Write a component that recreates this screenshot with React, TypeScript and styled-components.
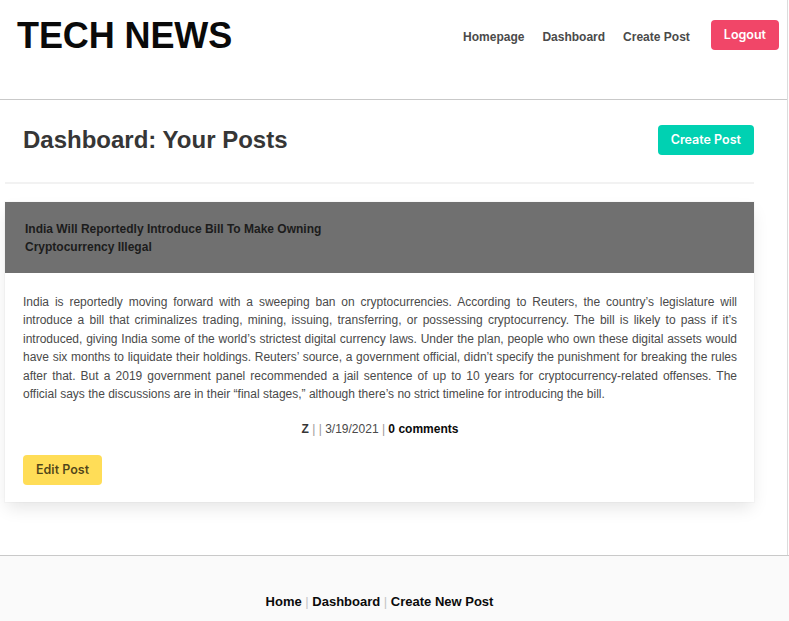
import React from "react";
import styled, { createGlobalStyle } from "styled-components";

const GlobalStyle = createGlobalStyle`
    html, body {
        margin: 0;
        padding: 0;
        background: #ffffff;
    }
    body {
        font-family: "Liberation Sans", Arial, Helvetica, sans-serif;
        color: #4a4a4a;
    }
    * {
        box-sizing: border-box;
    }
`;

const post = {
    title: "India Will Reportedly Introduce Bill To Make Owning Cryptocurrency Illegal",
    body: "India is reportedly moving forward with a sweeping ban on cryptocurrencies. According to Reuters, the country\u2019s legislature will introduce a bill that criminalizes trading, mining, issuing, transferring, or possessing cryptocurrency. The bill is likely to pass if it\u2019s introduced, giving India some of the world\u2019s strictest digital currency laws. Under the plan, people who own these digital assets would have six months to liquidate their holdings. Reuters\u2019 source, a government official, didn\u2019t specify the punishment for breaking the rules after that. But a 2019 government panel recommended a jail sentence of up to 10 years for cryptocurrency-related offenses. The official says the discussions are in their \u201cfinal stages,\u201d although there\u2019s no strict timeline for introducing the bill.",
    author: "Z",
    date: "3/19/2021",
    comments: 0,
};

export default function App() {
    return (
        <>
            <GlobalStyle />
            <Page>
                <Header>
                    <Brand>TECH NEWS</Brand>
                    <Nav>
                        <NavLink>Homepage</NavLink>
                        <NavLink>Dashboard</NavLink>
                        <NavLink>Create Post</NavLink>
                        <Button $variant="danger" $spaced>
                            Logout
                        </Button>
                    </Nav>
                </Header>

                <Main>
                    <TitleRow>
                        <PageTitle>Dashboard: Your Posts</PageTitle>
                        <Button $variant="primary">Create Post</Button>
                    </TitleRow>
                    <Divider />

                    <Card>
                        <CardHeader>
                            <CardTitle>{post.title}</CardTitle>
                        </CardHeader>
                        <CardContent>
                            <Body>{post.body}</Body>
                            <Meta>
                                <Strong>{post.author}</Strong>
                                <Sep> | | </Sep>
                                {post.date}
                                <Sep> | </Sep>
                                <Strong $dark>{post.comments} comments</Strong>
                            </Meta>
                            <Button $variant="warning">Edit Post</Button>
                        </CardContent>
                    </Card>
                </Main>
            </Page>

            <Footer>
                <FooterLink>Home</FooterLink>
                <FooterSep> | </FooterSep>
                <FooterLink>Dashboard</FooterLink>
                <FooterSep> | </FooterSep>
                <FooterLink>Create New Post</FooterLink>
            </Footer>
        </>
    );
}

const Page = styled.div`
    width: 788px;
    border-right: 1px solid #dcdcdc;
    padding-bottom: 53px;
`;

const Header = styled.header`
    height: 100px;
    display: flex;
    justify-content: space-between;
    align-items: flex-start;
    padding: 15px 8px 0 17px;
    border-bottom: 1px solid #c9c9c9;
`;

const Brand = styled.h1`
    margin: 0;
    font-size: 36px;
    line-height: 41px;
    font-weight: 700;
    color: #0a0a0a;
    letter-spacing: -0.1px;
`;

const Nav = styled.nav`
    display: flex;
    align-items: center;
    margin-top: 5px;
`;

const NavLink = styled.a`
    padding: 4px 9px 0;
    font-size: 12px;
    font-weight: 700;
    color: #4a4a4a;
    line-height: 26px;
    cursor: pointer;
`;

const buttonColors = {
    danger: { bg: "#f14668", fg: "#ffffff" },
    primary: { bg: "#00d1b2", fg: "#ffffff" },
    warning: { bg: "#ffdd57", fg: "rgba(0, 0, 0, 0.7)" },
};

const Button = styled.button<{ $variant: keyof typeof buttonColors; $spaced?: boolean }>`
    height: 30px;
    padding: 0 13px;
    margin-left: ${props => (props.$spaced ? "12px" : "0")};
    border: none;
    border-radius: 4px;
    background: ${props => buttonColors[props.$variant].bg};
    color: ${props => buttonColors[props.$variant].fg};
    font-family: Inter, "Liberation Sans", sans-serif;
    font-size: 12.5px;
    font-weight: 600;
    line-height: 30px;
    cursor: pointer;
`;

const Main = styled.main`
    width: 749px;
    margin-left: 5px;
`;

const TitleRow = styled.div`
    display: flex;
    justify-content: space-between;
    align-items: center;
    margin-top: 25px;
    padding-left: 18px;
`;

const PageTitle = styled.h2`
    margin: -1px 0 0;
    font-size: 24px;
    line-height: 30px;
    font-weight: 700;
    color: #363636;
`;

const Divider = styled.hr`
    height: 2px;
    margin: 27px 0 18px;
    border: none;
    background: #f2f2f2;
`;

const Card = styled.article`
    background: #ffffff;
    box-shadow: 0 0.5em 1em -0.125em rgba(10, 10, 10, 0.1), 0 0 0 1px rgba(10, 10, 10, 0.02);
`;

const CardHeader = styled.header`
    background: #707070;
    padding: 18px 20px 17px;
`;

const CardTitle = styled.h3`
    max-width: 340px;
    margin: 0;
    font-size: 12px;
    line-height: 18px;
    font-weight: 700;
    color: #1c1c1c;
`;

const CardContent = styled.div`
    padding: 20px 17px 17px 18px;
`;

const Body = styled.p`
    margin: 0;
    font-size: 12px;
    line-height: 18.4px;
    text-align: justify;
    color: #4a4a4a;
`;

const Meta = styled.div`
    margin: 17px 0 17px;
    text-align: center;
    font-size: 12px;
    line-height: 18px;
    color: #4a4a4a;
`;

const Strong = styled.strong<{ $dark?: boolean }>`
    color: ${props => (props.$dark ? "#0a0a0a" : "#363636")};
`;

const Sep = styled.span`
    color: #9a9a9a;
    white-space: pre;
`;

const Footer = styled.footer`
    background: #fafafa;
    border-top: 1px solid #c9c9c9;
    padding: 37px 30px 48px 0;
    text-align: center;
    font-size: 13px;
    line-height: 18px;
`;

const FooterLink = styled.a`
    font-weight: 700;
    color: #0a0a0a;
    cursor: pointer;
`;

const FooterSep = styled.span`
    color: #c4c4c4;
    white-space: pre;
`;
